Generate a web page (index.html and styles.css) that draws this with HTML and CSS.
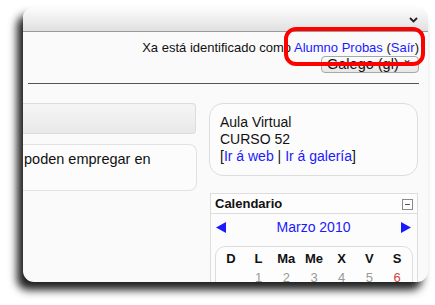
FILE: index.html
```html
<!DOCTYPE html>
<html lang="gl">
<head>
<meta charset="utf-8">
<link rel="stylesheet" href="styles.css">
</head>
<body>
<div class="window">
  <div class="topbar">
    <svg class="chev" width="9" height="6" viewBox="0 0 9 6"><path d="M1 1 L4.5 4.5 L8 1" fill="none" stroke="#222" stroke-width="1.8"/></svg>
  </div>
  <div class="header">
    <div class="login">Xa está identificado como <a href="#">Alumno Probas</a> (<a href="#">Saír</a>)</div>
    <div class="langsel"><span class="langtext">Galego (gl)</span><span class="langarrow">⌄</span></div>
  </div>
  <div class="rule"></div>
  <div class="content">
    <div class="leftcol">
      <div class="graybar"></div>
      <div class="textblock">poden empregar en</div>
    </div>
    <div class="rightcol">
      <div class="aula">
        <div>Aula Virtual</div>
        <div>CURSO 52</div>
        <div>[<a href="#">Ir á web</a> | <a href="#">Ir á galería</a>]</div>
      </div>
      <div class="cal">
        <div class="calhead">
          <span>Calendario</span>
          <span class="minus"></span>
        </div>
        <div class="calnav">
          <svg class="arrow" width="10" height="11" viewBox="0 0 10 11"><path d="M0 5.5 L10 0 L10 11 Z" fill="#1a1aff"/></svg>
          <a href="#" class="month">Marzo 2010</a>
          <svg class="arrow" width="10" height="11" viewBox="0 0 10 11"><path d="M10 5.5 L0 0 L0 11 Z" fill="#1a1aff"/></svg>
        </div>
        <div class="calbox">
          <div class="calrow days">
            <span>D</span><span>L</span><span>Ma</span><span>Me</span><span>X</span><span>V</span><span>S</span>
          </div>
          <div class="calrow nums">
            <span></span><span>1</span><span>2</span><span>3</span><span>4</span><span>5</span><span class="sat">6</span>
          </div>
        </div>
      </div>
    </div>
  </div>
</div>
<div class="highlight"></div>
</body>
</html>
```

FILE: styles.css
```css
html, body {
  margin: 0;
  padding: 0;
  background: #ffffff;
}
body {
  width: 435px;
  height: 305px;
  overflow: hidden;
  padding: 7px 0 0 23px;
  box-sizing: border-box;
  font-family: "Liberation Sans", Arial, sans-serif;
  color: #111;
  position: relative;
}
a {
  color: #1a1aff;
  text-decoration: none;
}
.window {
  width: 405px;
  height: 275px;
  background: #fafafa;
  border-radius: 11px;
  overflow: hidden;
  box-shadow: -6px 8px 8px rgba(0, 0, 0, 0.88);
  display: flex;
  flex-direction: column;
}
.topbar {
  height: 24px;
  flex: none;
  background: linear-gradient(#fdfdfd, #e0e0e0);
  border-bottom: 1px solid #9a9a9a;
  display: flex;
  justify-content: flex-end;
  align-items: center;
  padding-right: 10px;
}
.chev {
  margin-top: 2px;
}
.header {
  height: 51px;
  flex: none;
  display: flex;
  flex-direction: column;
  align-items: flex-end;
  padding-right: 9px;
}
.login {
  font-size: 13px;
  line-height: 17px;
  margin-top: 7px;
  color: #111;
}
.langsel {
  width: 98px;
  height: 17px;
  box-sizing: border-box;
  border: 1px solid #a8a8a8;
  border-radius: 4px;
  background: linear-gradient(#fdfdfd, #e6e6e6);
  overflow: hidden;
  display: flex;
  align-items: flex-end;
}
.langtext {
  font-size: 14.5px;
  line-height: 14px;
  margin-left: 5px;
  margin-bottom: 1px;
  color: #111;
}
.langarrow {
  font-size: 12px;
  line-height: 12px;
  margin-left: auto;
  margin-right: 6px;
  margin-bottom: 7px;
  color: #222;
}
.rule {
  height: 1px;
  background: #555;
  margin: 0 9px 0 5px;
  flex: none;
}
.content {
  display: flex;
  gap: 12px;
  padding-right: 9px;
  font-size: 14px;
  line-height: 17px;
}
.leftcol {
  width: 174px;
  flex: none;
  padding-top: 19px;
}
.graybar {
  height: 31px;
  width: 173px;
  box-sizing: border-box;
  border: 1px solid #dcdcdc;
  border-left: none;
  border-radius: 0 4px 4px 0;
  background: linear-gradient(#f5f5f5, #e9e9e9);
}
.textblock {
  margin-top: 10px;
  height: 47px;
  box-sizing: border-box;
  border: 1px solid #e2e2e2;
  border-left: none;
  border-radius: 0 8px 8px 0;
  background: #fcfcfc;
  padding: 6px 0 0 1px;
  font-size: 14.5px;
}
.rightcol {
  width: 209px;
  flex: none;
  padding-top: 19px;
}
.aula {
  border: 1px solid #dddddd;
  border-radius: 14px;
  padding: 10px 10px;
  background: #fcfcfc;
}
.cal {
  margin-top: 17px;
  border: 1px solid #dddddd;
  background: #fcfcfc;
  margin-left: 1px;
}
.calhead {
  height: 19px;
  border-bottom: 1px solid #dddddd;
  display: flex;
  align-items: center;
  justify-content: space-between;
  padding: 0 4px 0 4px;
  font-weight: bold;
  font-size: 13px;
  background: #fdfdfd;
}
.minus {
  width: 9px;
  height: 9px;
  border: 1px solid #8a8a8a;
  position: relative;
  margin-top: 2px;
  background: #fff;
}
.minus::after {
  content: "";
  position: absolute;
  left: 2px;
  right: 2px;
  top: 4px;
  height: 1px;
  background: #555;
}
.calnav {
  height: 26px;
  display: flex;
  align-items: center;
  justify-content: space-between;
  padding: 0 6px 0 5px;
}
.month {
  font-size: 14px;
}
.calbox {
  margin: 6px 4px 0 4px;
  border: 1px solid #dddddd;
  border-radius: 10px;
  padding: 2px 1px 20px 1px;
  background: #fdfdfd;
}
.calrow {
  display: grid;
  grid-template-columns: repeat(7, 1fr);
  text-align: center;
  font-size: 13px;
}
.days {
  font-weight: bold;
  height: 20px;
  line-height: 20px;
}
.nums {
  color: #999;
  height: 18px;
  line-height: 18px;
}
.nums .sat {
  color: #cc4444;
}
.highlight {
  position: absolute;
  left: 284px;
  top: 27px;
  width: 141px;
  height: 39px;
  box-sizing: border-box;
  border: 4px solid #ff0000;
  border-radius: 12px;
}
```
